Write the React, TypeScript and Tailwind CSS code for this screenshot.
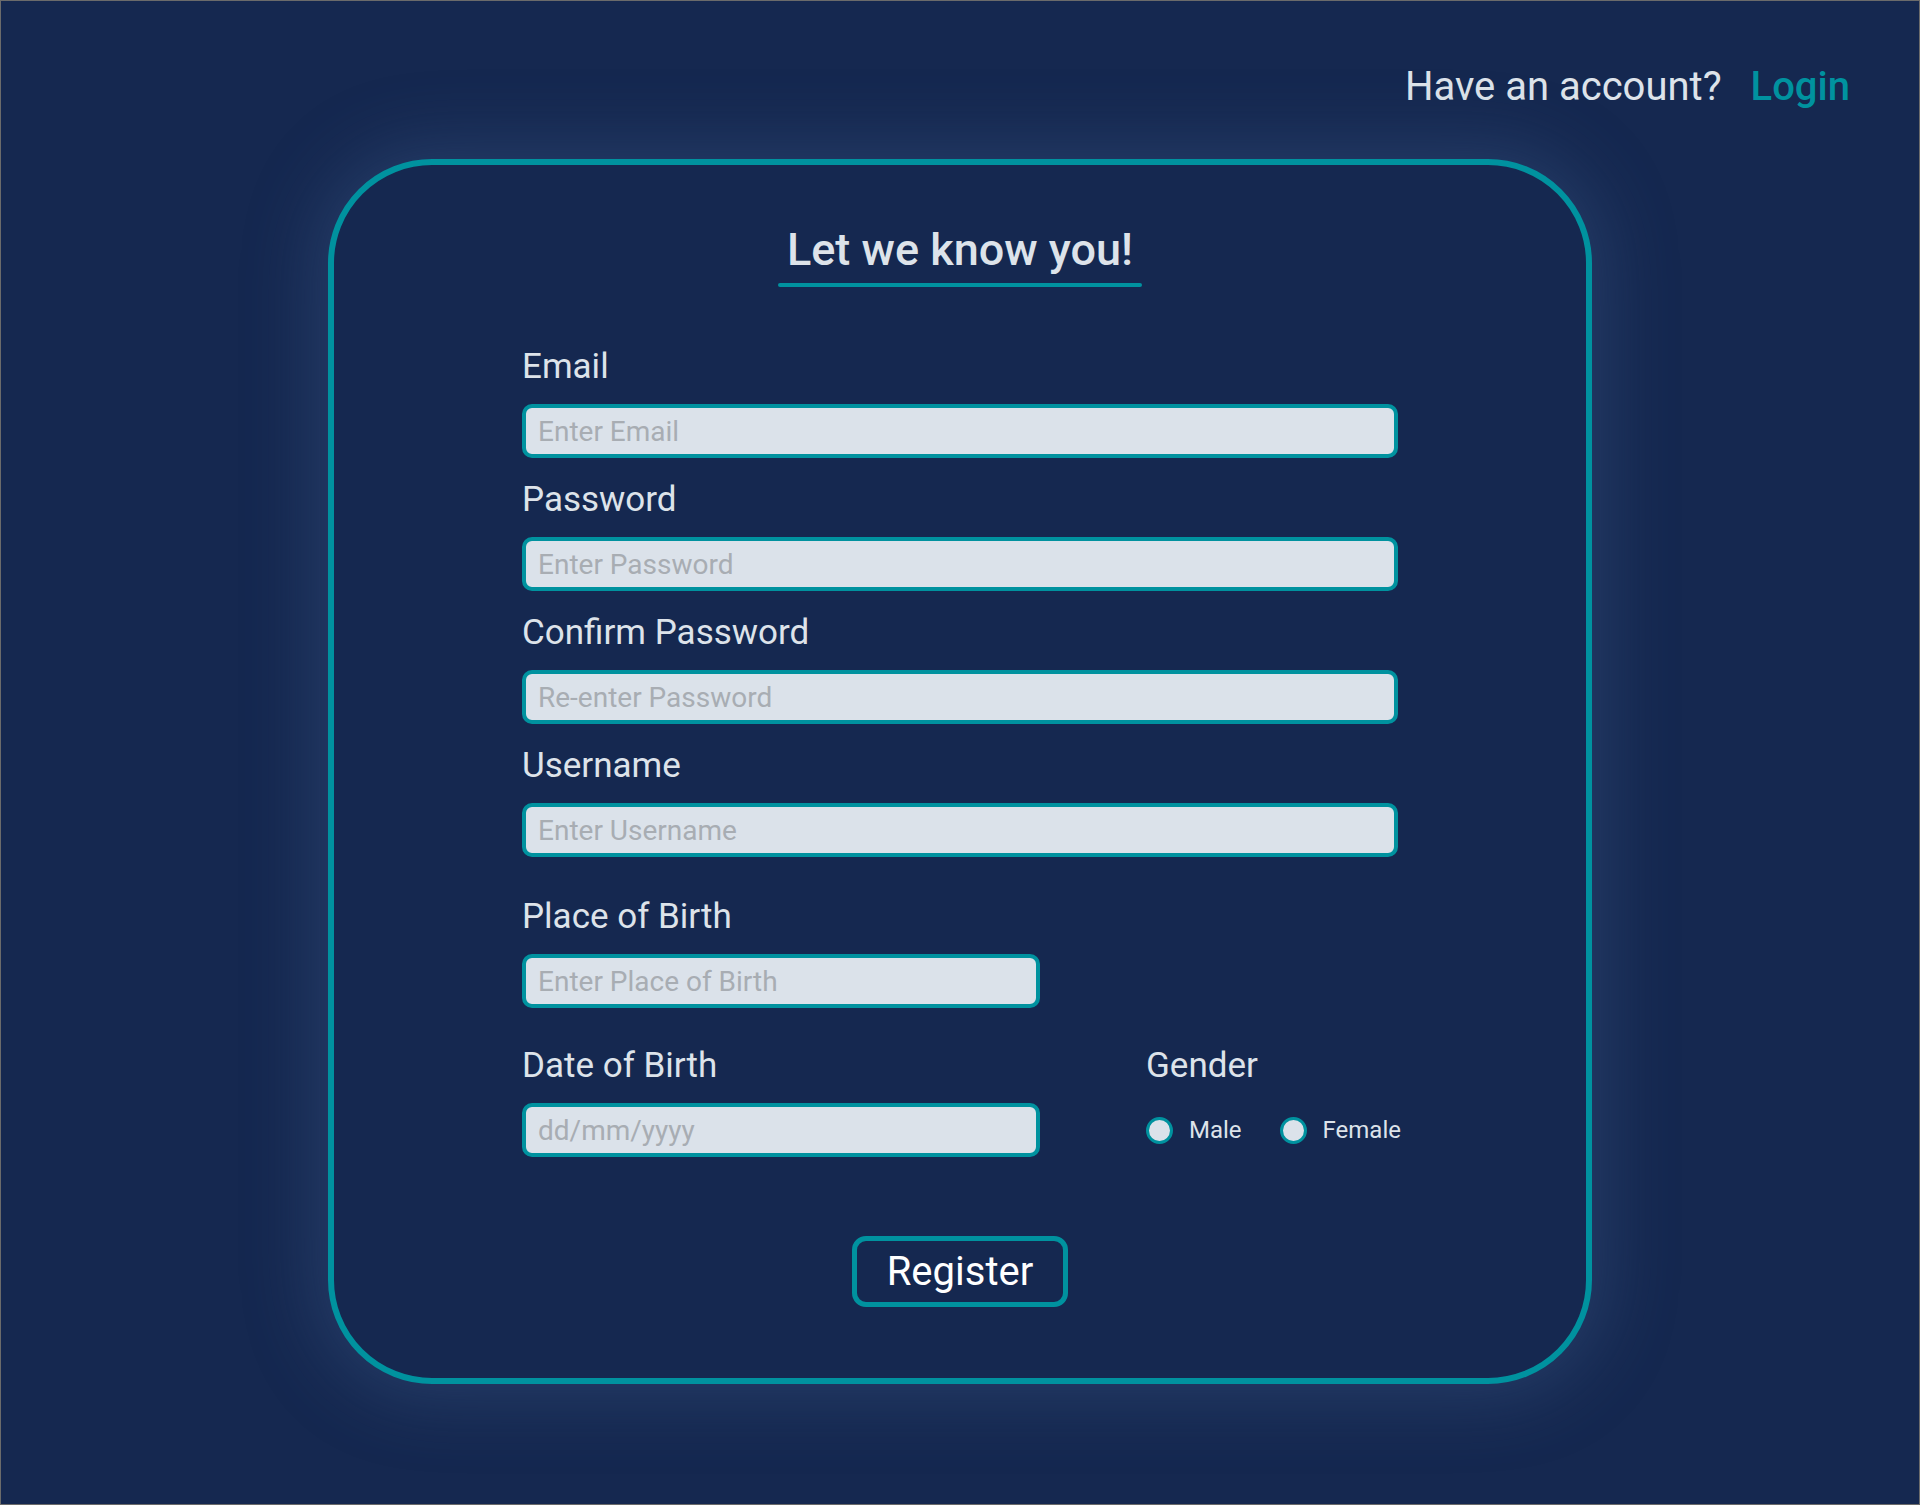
import React from 'react'

const FIELDS: { label: string; placeholder: string; type: string }[] = [
  { label: 'Email', placeholder: 'Enter Email', type: 'email' },
  { label: 'Password', placeholder: 'Enter Password', type: 'password' },
  { label: 'Confirm Password', placeholder: 'Re-enter Password', type: 'password' },
  { label: 'Username', placeholder: 'Enter Username', type: 'text' },
]

const inputCls =
  'h-[54px] w-full rounded-[10px] border-4 border-[#00929f] bg-[#dbe2ea] px-3 text-[28px] leading-none text-[#1f2a3d] outline-none placeholder:text-[#a8adb3]'

function Field({ label, placeholder, type, className = '' }: { label: string; placeholder: string; type: string; className?: string }) {
  return (
    <div className={className}>
      <label className="mb-5 block text-[35px] leading-none text-[#dde3ea]">{label}</label>
      <input type={type} placeholder={placeholder} className={inputCls} />
    </div>
  )
}

function Radio({ label }: { label: string }) {
  return (
    <label className="flex items-center gap-4">
      <input
        type="radio"
        name="gender"
        className="h-[27px] w-[27px] shrink-0 appearance-none rounded-full border-[3px] border-[#00929f] bg-[#dbe2ea]"
      />
      <span className="text-[24px] leading-none text-[#dde3ea]">{label}</span>
    </label>
  )
}

export default function App() {
  return (
    <div className="min-h-[1505px] border border-[#6b6b6b] bg-[#152850] font-['Roboto',sans-serif]">
      {/* Header */}
      <header className="flex justify-end gap-[29px] pr-[69px] pt-[66px] text-[40px] leading-none">
        <span className="text-[#dde3ea]">Have an account?</span>
        <a href="#" className="font-medium text-[#00929f]">Login</a>
      </header>

      {/* Card */}
      <main className="mt-[52px] flex justify-center">
        <div className="w-[1264px] rounded-[104px] border-[6px] border-[#00929f] bg-[#152850] pb-[71px] pt-[62px] shadow-[0_0_70px_12px_rgba(70,100,150,0.35)]">
          <div className="flex flex-col items-center">
            <h1 className="px-2 text-[45px] font-medium leading-none text-[#dde3ea]">Let we know you!</h1>
            <div className="mt-[11px] h-1 w-[364px] rounded-full bg-[#00929f]" />
          </div>

          <form className="mx-auto mt-[62px] w-[876px]">
            <div className="flex flex-col gap-[24px]">
              {FIELDS.map((f) => (
                <Field key={f.label} {...f} />
              ))}
            </div>

            <Field label="Place of Birth" placeholder="Enter Place of Birth" type="text" className="mt-[42px] w-[518px]" />

            <div className="mt-[40px] flex gap-[106px]">
              <Field label="Date of Birth" placeholder="dd/mm/yyyy" type="text" className="w-[518px] shrink-0" />
              <div className="shrink-0">
                <div className="mb-5 text-[35px] leading-none text-[#dde3ea]">Gender</div>
                <div className="flex h-[54px] items-center gap-[38px]">
                  <Radio label="Male" />
                  <Radio label="Female" />
                </div>
              </div>
            </div>

            <div className="mt-[79px] flex justify-center">
              <button
                type="button"
                className="h-[71px] w-[216px] rounded-[14px] border-[5px] border-[#00929f] text-[40px] leading-none text-white"
              >
                Register
              </button>
            </div>
          </form>
        </div>
      </main>
    </div>
  )
}
